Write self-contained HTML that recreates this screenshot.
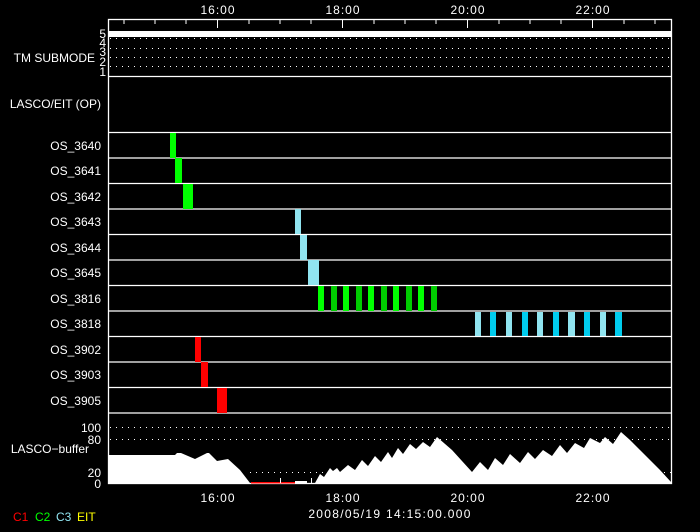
<!DOCTYPE html>
<html><head><meta charset="utf-8"><style>
html,body{margin:0;padding:0;background:#000;}
svg{display:block}
text{font-family:"Liberation Sans","DejaVu Sans",sans-serif;font-size:12px;fill:#fff;}
</style></head><body>
<svg width="700" height="532" viewBox="0 0 700 532" xmlns="http://www.w3.org/2000/svg">
<rect width="700" height="532" fill="#000"/>
<text x="218" y="14" text-anchor="middle" style="letter-spacing:1px">16:00</text>
<text x="343" y="14" text-anchor="middle" style="letter-spacing:1px">18:00</text>
<text x="468" y="14" text-anchor="middle" style="letter-spacing:1px">20:00</text>
<text x="593" y="14" text-anchor="middle" style="letter-spacing:1px">22:00</text>
<rect x="108.5" y="19.5" width="563" height="464" fill="none" stroke="#fff" stroke-width="1.3"/>
<g stroke="#fff" stroke-width="1">
<line x1="124" y1="20" x2="124" y2="24"/><line x1="155" y1="20" x2="155" y2="24"/><line x1="186" y1="20" x2="186" y2="24"/>
<line x1="217.5" y1="20" x2="217.5" y2="28"/>
<line x1="249" y1="20" x2="249" y2="24"/><line x1="280" y1="20" x2="280" y2="24"/><line x1="311" y1="20" x2="311" y2="24"/>
<line x1="342.5" y1="20" x2="342.5" y2="28"/>
<line x1="374" y1="20" x2="374" y2="24"/><line x1="405" y1="20" x2="405" y2="24"/><line x1="436" y1="20" x2="436" y2="24"/>
<line x1="467.5" y1="20" x2="467.5" y2="28"/>
<line x1="499" y1="20" x2="499" y2="24"/><line x1="530" y1="20" x2="530" y2="24"/><line x1="561" y1="20" x2="561" y2="24"/>
<line x1="592.5" y1="20" x2="592.5" y2="28"/>
<line x1="624" y1="20" x2="624" y2="24"/><line x1="655" y1="20" x2="655" y2="24"/>
</g>
<rect x="109" y="31" width="562" height="6" fill="#fff"/>
<g stroke="#fff" stroke-width="1" stroke-dasharray="1 5">
<line x1="110" y1="38.5" x2="671" y2="38.5"/>
<line x1="110" y1="48.5" x2="671" y2="48.5"/>
<line x1="110" y1="57.5" x2="671" y2="57.5"/>
<line x1="110" y1="66.5" x2="671" y2="66.5"/>
</g>
<text x="106" y="38" text-anchor="end" font-size="11">5</text>
<text x="106" y="47" text-anchor="end" font-size="11">4</text>
<text x="106" y="56" text-anchor="end" font-size="11">3</text>
<text x="106" y="66" text-anchor="end" font-size="11">2</text>
<text x="106" y="76" text-anchor="end" font-size="11">1</text>
<text x="95" y="62" text-anchor="end" font-size="11.5">TM SUBMODE</text>
<g stroke="#fff" stroke-width="1.3">
<line x1="108" y1="76.5" x2="671" y2="76.5"/>
<line x1="108" y1="132.5" x2="671" y2="132.5"/>
<line x1="108" y1="158" x2="671" y2="158"/>
<line x1="108" y1="183.5" x2="671" y2="183.5"/>
<line x1="108" y1="209" x2="671" y2="209"/>
<line x1="108" y1="234.5" x2="671" y2="234.5"/>
<line x1="108" y1="260" x2="671" y2="260"/>
<line x1="108" y1="285.5" x2="671" y2="285.5"/>
<line x1="108" y1="311" x2="671" y2="311"/>
<line x1="108" y1="336.5" x2="671" y2="336.5"/>
<line x1="108" y1="362" x2="671" y2="362"/>
<line x1="108" y1="387.5" x2="671" y2="387.5"/>
<line x1="108" y1="413" x2="671" y2="413"/>
</g>
<text x="101" y="108" text-anchor="end">LASCO/EIT (OP)</text>
<text x="101" y="150" text-anchor="end">OS_3640</text>
<text x="101" y="175" text-anchor="end">OS_3641</text>
<text x="101" y="201" text-anchor="end">OS_3642</text>
<text x="101" y="226" text-anchor="end">OS_3643</text>
<text x="101" y="252" text-anchor="end">OS_3644</text>
<text x="101" y="277" text-anchor="end">OS_3645</text>
<text x="101" y="303" text-anchor="end">OS_3816</text>
<text x="101" y="328" text-anchor="end">OS_3818</text>
<text x="101" y="354" text-anchor="end">OS_3902</text>
<text x="101" y="379" text-anchor="end">OS_3903</text>
<text x="101" y="405" text-anchor="end">OS_3905</text>
<rect x="170" y="133" width="6" height="25" fill="#00ff00"/>
<rect x="175" y="158" width="7" height="25" fill="#00ff00"/>
<rect x="183" y="184" width="10" height="25" fill="#00ff00"/>
<rect x="295" y="209" width="6" height="25" fill="#90e4f0"/>
<rect x="300" y="235" width="7" height="25" fill="#90e4f0"/>
<rect x="308" y="260" width="11" height="25" fill="#90e4f0"/>
<g>
<rect x="318" y="286" width="6" height="25" fill="#00ff00"/>
<rect x="331" y="286" width="6" height="25" fill="#00cc00"/>
<rect x="343" y="286" width="6" height="25" fill="#00ff00"/>
<rect x="356" y="286" width="6" height="25" fill="#00cc00"/>
<rect x="368" y="286" width="6" height="25" fill="#00ff00"/>
<rect x="381" y="286" width="6" height="25" fill="#00cc00"/>
<rect x="393" y="286" width="6" height="25" fill="#00ff00"/>
<rect x="406" y="286" width="6" height="25" fill="#00cc00"/>
<rect x="418" y="286" width="6" height="25" fill="#00ff00"/>
<rect x="431" y="286" width="6" height="25" fill="#00cc00"/>
</g>
<g>
<rect x="475" y="312" width="6" height="24" fill="#90e4f0"/>
<rect x="490" y="312" width="6" height="24" fill="#00ccee"/>
<rect x="506" y="312" width="6" height="24" fill="#90e4f0"/>
<rect x="522" y="312" width="6" height="24" fill="#00ccee"/>
<rect x="537" y="312" width="6" height="24" fill="#90e4f0"/>
<rect x="553" y="312" width="6" height="24" fill="#00ccee"/>
<rect x="568" y="312" width="7" height="24" fill="#90e4f0"/>
<rect x="584" y="312" width="6" height="24" fill="#00ccee"/>
<rect x="600" y="312" width="6" height="24" fill="#90e4f0"/>
<rect x="615" y="312" width="7" height="24" fill="#00ccee"/>
</g>
<rect x="195" y="337" width="6" height="25" fill="#ff0000"/>
<rect x="201" y="362" width="7" height="25" fill="#ff0000"/>
<rect x="217" y="388" width="10" height="25" fill="#ff0000"/>
<g stroke="#fff" stroke-width="1" stroke-dasharray="1 5">
<line x1="110" y1="427.5" x2="671" y2="427.5"/>
<line x1="110" y1="439.5" x2="671" y2="439.5"/>
<line x1="250" y1="472.5" x2="671" y2="472.5"/>
</g>
<polygon fill="#fff" points="109,455 175,455 177,453 181,453 195,459 207,453 209,453 217,461 228,459 240,470 250,483 109,483"/>
<rect x="251" y="482" width="44" height="1.5" fill="#ff0000"/>
<rect x="280" y="478" width="1" height="5" fill="#fff"/>
<rect x="295" y="481" width="12" height="2" fill="#fff"/>
<rect x="311" y="478" width="1" height="5" fill="#fff"/>
<polygon fill="#fff" points="315,483 320,474 324,477 330,468 333,471 337,468 340,472 348,465 355,470 362,460 368,466 375,456 381,462 388,452 392,458 398,448 403,454 410,444 416,449 423,442 430,447 437,437 452,450 472,472 480,462 488,470 495,458 503,465 510,454 520,463 528,452 535,459 543,450 552,456 560,445 567,453 575,443 584,448 590,438 600,443 605,437 613,444 621,432 630,440 640,450 660,470 671,482 671,483"/>
<text x="101" y="432" text-anchor="end">100</text>
<text x="101" y="444" text-anchor="end">80</text>
<text x="89" y="453" text-anchor="end">LASCO−buffer</text>
<text x="101" y="477" text-anchor="end">20</text>
<text x="101" y="488" text-anchor="end">0</text>
<text x="218" y="502" text-anchor="middle" style="letter-spacing:1px">16:00</text>
<text x="343" y="502" text-anchor="middle" style="letter-spacing:1px">18:00</text>
<text x="468" y="502" text-anchor="middle" style="letter-spacing:1px">20:00</text>
<text x="593" y="502" text-anchor="middle" style="letter-spacing:1px">22:00</text>
<text x="390" y="518" text-anchor="middle" style="letter-spacing:1.3px">2008/05/19 14:15:00.000</text>
<text x="13" y="521" font-size="10" style="fill:#ff0000">C1</text>
<text x="35" y="521" font-size="10" style="fill:#00ff00">C2</text>
<text x="56" y="521" font-size="10" style="fill:#90e4f0">C3</text>
<text x="77" y="521" font-size="10" style="fill:#ffff00">EIT</text>
</svg>
</body></html>
